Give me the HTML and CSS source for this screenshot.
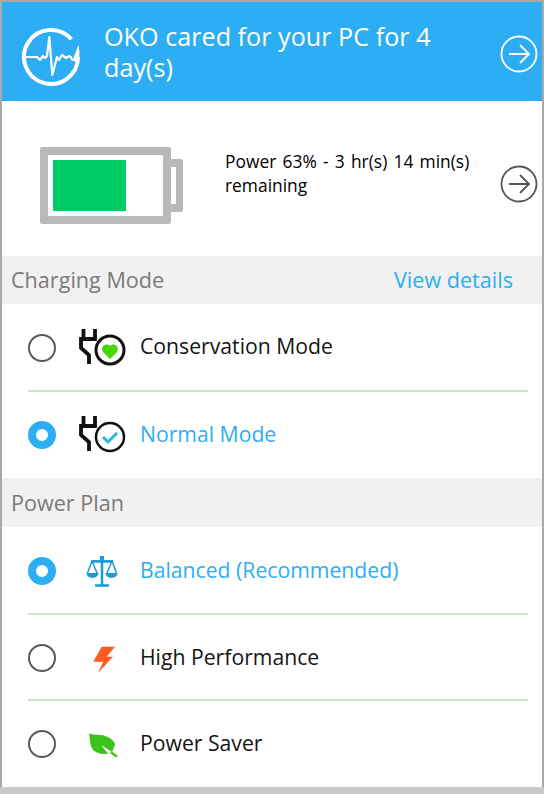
FILE: index.html
```html
<!DOCTYPE html>
<html lang="en">
<head>
<meta charset="utf-8">
<title>Power</title>
<link rel="stylesheet" href="styles.css">
</head>
<body>
<div class="window">
  <header class="banner">
    <svg class="logo" width="60" height="60" viewBox="0 0 60 60">
      <path class="logo-ring" d="M50.400 12.300A27 27 0 1 0 57 30" />
      <path class="logo-pulse" d="M4 30H16L19 33L22 29L24 31L26 29L28.300 10L31.300 48L36 30L38 33L41 28L45 31L48 29L51 31" />
      <path class="logo-wedge" d="M48 29L52 32L57.500 18C59 25 58.500 31 57 36L50 33Z" />
    </svg>
    <div class="banner-text">OKO cared for your PC for 4 day(s)</div>
    <svg class="arrow arrow-top" width="38" height="38" viewBox="0 0 38 38">
      <circle class="arrow-light" cx="19" cy="19" r="17.500" />
      <path class="arrow-light" d="M9 19H29M20 10L29 19L20 28" />
    </svg>
  </header>

  <section class="battery-row">
    <div class="battery">
      <div class="battery-body"><div class="battery-fill"></div></div>
      <div class="battery-cap"></div>
    </div>
    <div class="battery-text">Power 63% - 3 hr(s) 14 min(s) remaining</div>
    <svg class="arrow arrow-bottom" width="38" height="38" viewBox="0 0 38 38">
      <circle class="arrow-dark" cx="19" cy="19" r="17.500" />
      <path class="arrow-dark" d="M9 19H29M20 10L29 19L20 28" />
    </svg>
  </section>

  <div class="section-head">
    <span>Charging Mode</span>
    <span class="link">View details</span>
  </div>
  <div class="option tall divided">
    <span class="radio"></span>
    <svg class="icon-wide" width="48" height="38" viewBox="0 0 48 38">
      <path class="plug" d="M5.500 1V11M17 1V11H3V20L11 27V36" />
      <circle class="plug-ring" cx="32" cy="22" r="14" />
      <path class="heart" d="M32 31L25.500 24.500C21.500 19.500 27.500 13.500 32 18C36.500 13.500 42.500 19.500 38.500 24.500Z" />
    </svg>
    <span class="label raised">Conservation Mode</span>
  </div>
  <div class="option short">
    <span class="radio on"></span>
    <svg class="icon-wide" width="48" height="38" viewBox="0 0 48 38">
      <path class="plug" d="M5.500 1V11M17 1V11H3V20L11 27V36" />
      <circle class="plug-ring thin" cx="32" cy="22" r="14" />
      <path class="check" d="M25 22L30 27L39 18" />
    </svg>
    <span class="label on">Normal Mode</span>
  </div>

  <div class="section-head second">
    <span>Power Plan</span>
  </div>
  <div class="option tall divided">
    <span class="radio on"></span>
    <span class="icon-slot">
      <svg width="32" height="34" viewBox="0 0 32 34">
        <path class="scale-line" d="M16 3V31M5 7H27M6 7L1.500 19M6 7L11 19M26 7L21 19M26 7L30.500 19" />
        <path class="scale-post" d="M16 3V31M9 31.500H23M5 7.500H27" />
        <path class="scale-fill" d="M0.500 19H12.500C12 25.500 1 25.500 0.500 19ZM19.500 19H31.500C31 25.500 20 25.500 19.500 19ZM14 2H18V6H14Z" />
      </svg>
    </span>
    <span class="label on">Balanced (Recommended)</span>
  </div>
  <div class="option tall-short divided">
    <span class="radio"></span>
    <span class="icon-slot">
      <svg width="32" height="32" viewBox="0 0 32 32">
        <path class="bolt" d="M15.700 4.700H29L20.700 14.700H27L11.700 31.300L17.300 19.700H7.300Z" />
      </svg>
    </span>
    <span class="label">High Performance</span>
  </div>
  <div class="option short">
    <span class="radio"></span>
    <span class="icon-slot">
      <svg width="32" height="32" viewBox="0 0 32 32">
        <path class="leaf" d="M3.300 5.300C9 8 14 6 19 8C25 10 28 13 29 16C28 20 27 22 26 24L15 17L22 25.500C16 27 10 25 7 22C4 18 3.500 11 3.300 5.300Z" />
        <path class="leaf-stem" d="M25 24.500L31 28.500" />
      </svg>
    </span>
    <span class="label">Power Saver</span>
  </div>
</div>
</body>
</html>
```

FILE: styles.css
```css
* { box-sizing: border-box; }
html, body { margin: 0; padding: 0; }
body {
  width: 544px;
  height: 794px;
  overflow: hidden;
  font-family: "Open Sans", "Noto Sans", sans-serif;
  background: #c9c9c9;
}
.window {
  width: 544px;
  height: 787px;
  border: 2px solid #a9a9a9;
  border-bottom: 0;
  background: #fff;
  display: flex;
  flex-direction: column;
}
.banner {
  height: 99px;
  background: #2daef4;
  color: #fff;
  display: flex;
  align-items: center;
  padding: 0 4px 0 19px;
  flex: none;
}
.logo { flex: none; margin: 11px 23px 0 0; }
.logo-ring { fill: none; stroke: #fff; stroke-width: 4; }
.logo-pulse { fill: none; stroke: #fff; stroke-width: 2.200; stroke-linejoin: round; }
.logo-wedge { fill: #fff; }
.banner-text { flex: 1; font-size: 25.200px; line-height: 31px; padding: 1px 20px 0 0; }
.arrow { flex: none; }
.arrow-top { margin-top: 5px; }
.arrow-bottom { margin-top: 11px; }
.arrow-light, .arrow-dark { fill: none; stroke-width: 1.800; }
.arrow-light { stroke: #fff; }
.arrow-dark { stroke: #555; }
.battery-row {
  height: 155px;
  flex: none;
  display: flex;
  align-items: center;
  padding: 0 4px 0 38px;
}
.battery { display: flex; align-items: center; flex: none; width: 185px; margin-top: 14px; }
.battery-body {
  width: 131px;
  height: 77px;
  border: 8px solid #b9b9b9;
  border-radius: 2px;
  padding: 5px;
  background: #fff;
}
.battery-fill { width: 73px; height: 100%; background: #00cc66; }
.battery-cap {
  width: 12px;
  height: 53px;
  border: solid #b9b9b9;
  border-width: 8px 7px 8px 0;
  border-radius: 0 3px 3px 0;
}
.battery-text {
  flex: 1;
  font-size: 17.400px;
  word-spacing: 1.700px;
  line-height: 24px;
  color: #000;
  padding-right: 20px;
  margin-bottom: 11px;
}
.section-head {
  height: 48px;
  flex: none;
  background: #f1f1f1;
  color: #7a7a7a;
  font-size: 21.600px;
  padding: 0 29px 2px 9px;
  display: flex;
  align-items: center;
  justify-content: space-between;
}
.section-head.second { height: 49px; padding-bottom: 1px; }
.link { color: #2daef4; }
.option {
  display: flex;
  align-items: center;
  flex: none;
  margin: 0 14px 0 26px;
}
.tall { height: 88px; }
.tall-short { height: 86px; }
.short { height: 86px; }
.divided { border-bottom: 2px solid #cfe3cc; padding-top: 2px; }
.radio {
  width: 28px;
  height: 28px;
  border-radius: 50%;
  border: 2px solid #5a5a5a;
  flex: none;
  margin-right: 22px;
}
.radio.on { border: 8px solid #2daef4; }
.icon-wide { flex: none; margin: 0 14px 3px 0; }
.icon-slot { width: 48px; flex: none; margin-right: 14px; display: flex; justify-content: center; }
.label { font-size: 21.200px; color: #151515; padding-bottom: 4px; }
.label.raised { padding-bottom: 6px; }
.label.on { color: #2daef4; }
.plug { fill: none; stroke: #111; stroke-width: 3.800; }
.plug-ring { fill: #fff; stroke: #111; stroke-width: 3; }
.plug-ring.thin { stroke-width: 2.500; }
.heart { fill: #44d900; }
.check { fill: none; stroke: #26b6e0; stroke-width: 3; }
.scale-line { fill: none; stroke: #1a9ad6; stroke-width: 1.500; }
.scale-post { fill: none; stroke: #1a9ad6; stroke-width: 2.500; }
.scale-fill { fill: #1a9ad6; }
.bolt { fill: #ff5a1f; }
.leaf { fill: #3cc21d; }
.leaf-stem { fill: none; stroke: #3cc21d; stroke-width: 2.500; }
```
